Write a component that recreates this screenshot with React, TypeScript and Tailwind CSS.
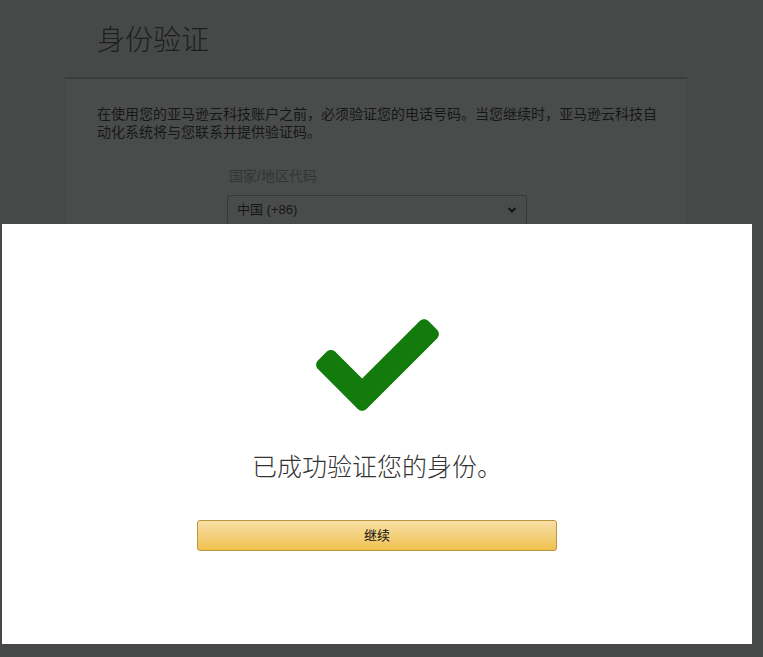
import React from 'react'

const CJK = "font-['Liberation_Sans','Noto_Sans_CJK_SC',sans-serif]";

const CheckIcon = () => (
  <svg width="123" height="94" viewBox="0 60 512 392" fill="#127b0c">
    <path d="M173.898 439.404l-166.4-166.4c-9.997-9.997-9.997-26.206 0-36.204l36.203-36.204c9.997-9.998 26.207-9.998 36.204 0L192 312.69 432.095 72.596c9.997-9.997 26.207-9.997 36.204 0l36.203 36.204c9.997 9.997 9.997 26.206 0 36.204l-294.4 294.401c-9.998 9.997-26.207 9.997-36.204-.001z" />
  </svg>
);

const App = () => {
  return (
    <div className={`relative w-[763px] h-[657px] overflow-hidden bg-[#474948] ${CJK}`}>
      <div className="ml-[65px] w-[622px]">
        <div className="h-[79px] border-b-2 border-[#3a3c3b] px-[32px] pt-[23px]">
          <h1 className="text-[28px] font-light leading-[36px] text-[#1d1e1e]">身份验证</h1>
        </div>
        <div className="bg-[#4a4c4b] pl-[32px] pr-[20px] pt-[26px] h-[200px]">
          <p className="text-[14px] leading-[18px] text-[#161717]">
            在使用您的亚马逊云科技账户之前，必须验证您的电话号码。当您继续时，亚马逊云科技自动化系统将与您联系并提供验证码。
          </p>
          <div className="ml-[130px] mt-[26px] w-[300px]">
            <div className="text-[14px] leading-[18px] text-[#333534] pl-[2px]">国家/地区代码</div>
            <div className="mt-[10px] h-[30px] rounded-[3px] border border-[#363837] bg-[#4a4c4b] flex items-center justify-between px-[9px]">
              <span className="text-[13px] text-[#151616]">中国 (+86)</span>
              <svg width="10" height="8" viewBox="0 0 10 8">
                <path d="M1.5 2 L5 5.5 L8.5 2" stroke="#111" strokeWidth="2" fill="none" />
              </svg>
            </div>
          </div>
        </div>
      </div>

      <div className="absolute left-[2px] top-[224px] w-[750px] h-[420px] bg-white flex flex-col items-center">
        <div className="mt-[94px]">
          <CheckIcon />
        </div>
        <div className="mt-[39px] text-[25px] leading-[32px] font-light text-[#333]">
          已成功验证您的身份。
        </div>
        <button className="mt-[37px] w-[360px] h-[31px] rounded-[3px] border border-[#b8973e] bg-gradient-to-b from-[#f7dfa5] to-[#f0c14b] text-[13px] text-[#111]">
          继续
        </button>
      </div>
    </div>
  );
}

export default App
